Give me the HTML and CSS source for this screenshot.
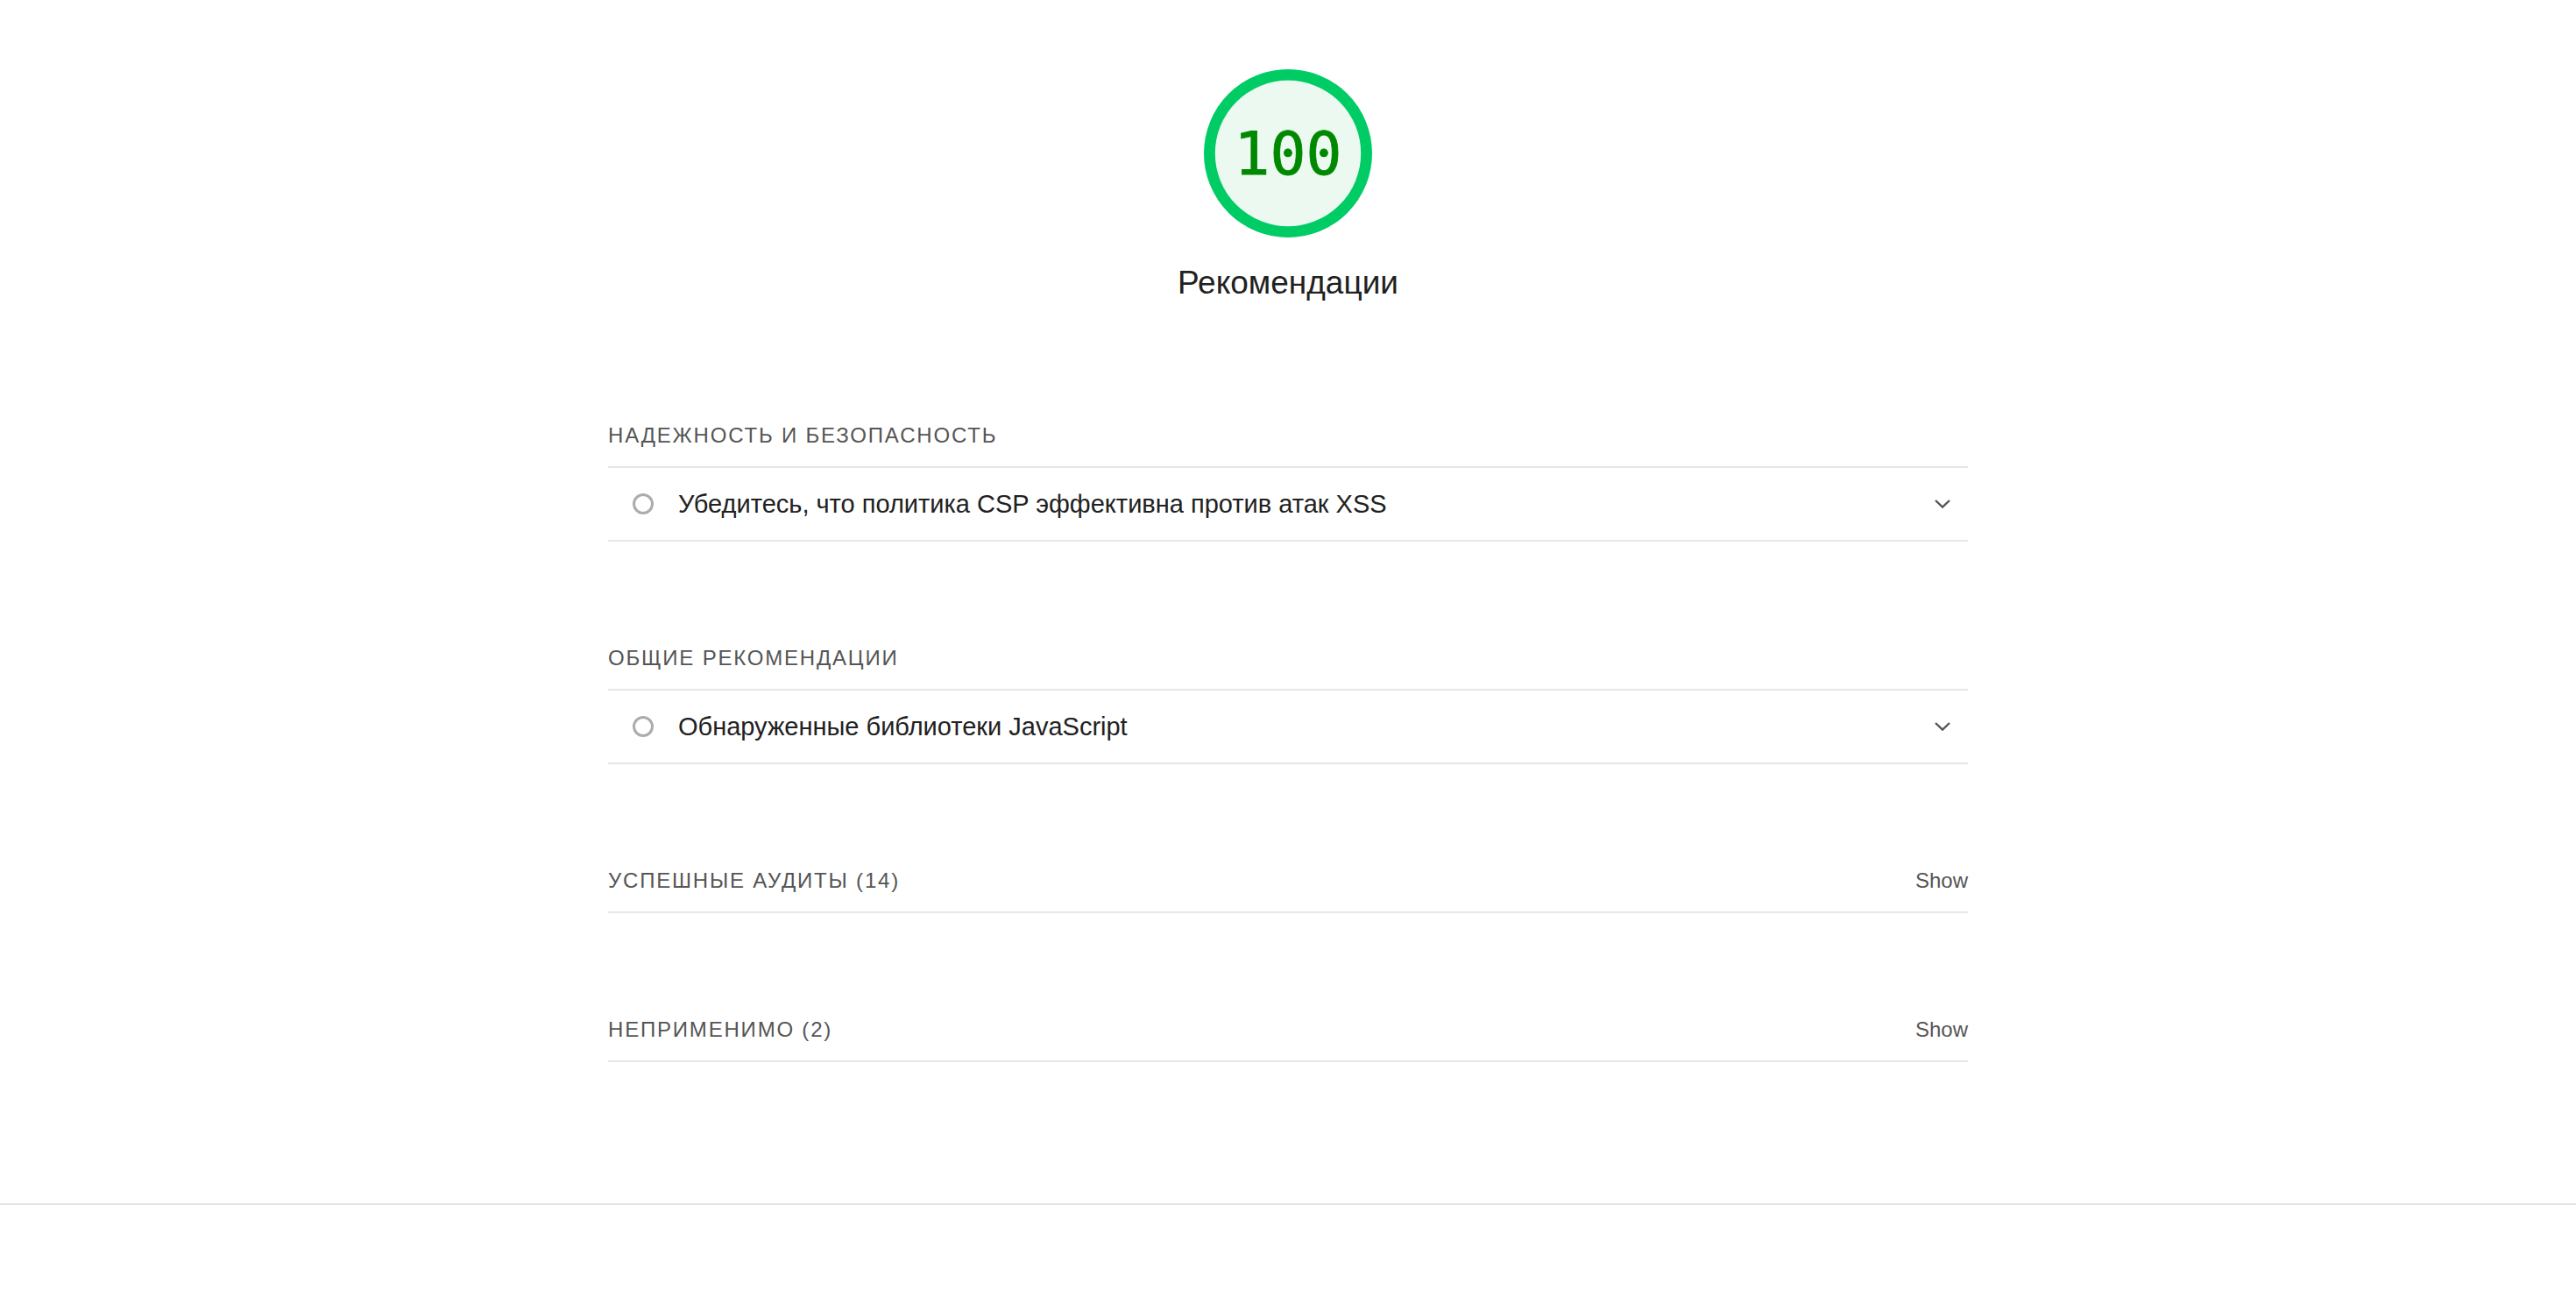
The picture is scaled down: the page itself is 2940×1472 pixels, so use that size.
FILE: index.html
```html
<!DOCTYPE html>
<html lang="ru">
<head>
<meta charset="utf-8">
<title>Рекомендации</title>
<link rel="stylesheet" href="styles.css">
</head>
<body>
<div class="report">
  <header class="cat-header">
    <div class="gauge">
      <svg class="gauge-svg" viewBox="0 0 120 120" aria-hidden="true">
        <circle cx="60" cy="60" r="56" class="gauge-arc"></circle>
      </svg>
      <span class="gauge-pct">100</span>
    </div>
    <div class="gauge-label">Рекомендации</div>
  </header>

  <section class="group group--first">
    <div class="group-header"><span class="group-title">Надежность и безопасность</span></div>
    <div class="audit">
      <span class="audit-icon"></span>
      <span class="audit-title">Убедитесь, что политика CSP эффективна против атак XSS</span>
      <svg class="chevron" viewBox="0 0 18 10" aria-hidden="true"><path d="M1 1 L9 8.6 L17 1"></path></svg>
    </div>
  </section>

  <section class="group">
    <div class="group-header"><span class="group-title">Общие рекомендации</span></div>
    <div class="audit">
      <span class="audit-icon"></span>
      <span class="audit-title">Обнаруженные библиотеки JavaScript</span>
      <svg class="chevron" viewBox="0 0 18 10" aria-hidden="true"><path d="M1 1 L9 8.6 L17 1"></path></svg>
    </div>
  </section>

  <section class="group">
    <div class="group-header"><span class="group-title">Успешные аудиты <span class="group-count">(14)</span></span><span class="show">Show</span></div>
  </section>

  <section class="group">
    <div class="group-header"><span class="group-title">Неприменимо <span class="group-count">(2)</span></span><span class="show">Show</span></div>
  </section>
</div>
<footer class="footer"></footer>
</body>
</html>
```

FILE: styles.css
```css
html, body {
  margin: 0;
  padding: 0;
  background: #ffffff;
}

body {
  font-family: "Liberation Sans", Arial, sans-serif;
  color: #212121;
}

.report {
  width: 1552px;
  margin: 0 auto;
  padding-top: 79px;
}

.cat-header {
  display: flex;
  flex-direction: column;
  align-items: center;
}

.gauge {
  display: grid;
  width: 192px;
  height: 192px;
  place-items: center;
}

.gauge > * {
  grid-area: 1 / 1;
}

.gauge-svg {
  width: 192px;
  height: 192px;
  display: block;
}

.gauge-arc {
  fill: #ecf9f1;
  stroke: #00cc66;
  stroke-width: 8;
}

.gauge-pct {
  font-family: "DejaVu Sans Mono", monospace;
  font-size: 68px;
  line-height: 1;
  color: #008800;
  margin-top: 2px;
  -webkit-text-stroke: 0.8px #008800;
}

.gauge-label {
  margin-top: 28px;
  font-size: 37px;
  line-height: 48px;
  color: #212121;
}

.group {
  margin-top: 117px;
}

.group--first {
  margin-top: 134px;
}

.group-header {
  display: flex;
  justify-content: space-between;
  align-items: center;
  height: 32px;
  padding-bottom: 19px;
  border-bottom: 2px solid #e6e6e6;
  font-size: 24px;
  line-height: 32px;
  color: #555555;
}

.group-title {
  text-transform: uppercase;
  letter-spacing: 1.8px;
}

.show {
  font-size: 24px;
  color: #555555;
}

.audit {
  display: flex;
  align-items: center;
  height: 82px;
  padding: 0 20px 0 28px;
  border-bottom: 2px solid #e6e6e6;
}

.audit-icon {
  flex: none;
  width: 24px;
  height: 24px;
  box-sizing: border-box;
  border-radius: 50%;
  border: 3px solid #acacac;
  margin-right: 28px;
}

.audit-title {
  flex: 1;
  font-size: 29px;
  line-height: 36px;
  color: #212121;
}

.chevron {
  flex: none;
  width: 18px;
  height: 10px;
  fill: none;
  stroke: #555555;
  stroke-width: 2.4;
}

.footer {
  margin-top: 161px;
  border-top: 2px solid #e3e3e3;
  height: 96px;
}
```
